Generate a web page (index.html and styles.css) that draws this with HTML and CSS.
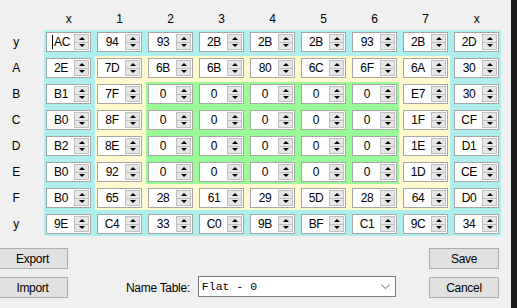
FILE: index.html
```html
<!DOCTYPE html>
<html lang="en">
<head>
    <meta charset="UTF-8">
    <meta name="viewport" content="width=device-width, initial-scale=1.0">
    <title>Attribute Table</title>
    <link rel="stylesheet" href="styles.css">
</head>
<body>
    <div class="screen">
        <div class="window">
            <div class="heads">
                <span>x</span><span>1</span><span>2</span><span>3</span><span>4</span><span>5</span><span>6</span><span>7</span><span>x</span>
            </div>
            <div class="table">
                <div class="rows">
                    <span>y</span><span>A</span><span>B</span><span>C</span><span>D</span><span>E</span><span>F</span><span>y</span>
                </div>
                <div class="panel cyan">
                    <div class="row" id="top"></div>
                    <div class="mid">
                        <div class="side" id="cyanLeft"></div>
                        <div class="panel yellow">
                            <div class="row" id="yellowTop"></div>
                            <div class="mid">
                                <div class="side" id="yellowLeft"></div>
                                <div class="green" id="green"></div>
                                <div class="side" id="yellowRight"></div>
                            </div>
                            <div class="row" id="yellowBottom"></div>
                        </div>
                        <div class="side" id="cyanRight"></div>
                    </div>
                    <div class="row" id="bottom"></div>
                </div>
            </div>
            <div class="footer">
                <button class="btn">Export</button>
                <div></div>
                <button class="btn">Save</button>
                <button class="btn">Import</button>
                <div class="name">
                    <label for="nameTable">Name Table:</label>
                    <div class="combo" id="nameTable">
                        <span>Flat - 0</span>
                        <svg width="9" height="6" viewBox="0 0 9 6"><polyline points="0.5,0.8 4.5,4.6 8.5,0.8" fill="none" stroke="#606060" stroke-width="1"/></svg>
                    </div>
                </div>
                <button class="btn">Cancel</button>
            </div>
        </div>
        <div class="edge"></div>
    </div>

    <script>
        const data = [
            ['AC', '94', '93', '2B', '2B', '2B', '93', '2B', '2D'],
            ['2E', '7D', '6B', '6B', '80', '6C', '6F', '6A', '30'],
            ['B1', '7F', '0', '0', '0', '0', '0', 'E7', '30'],
            ['B0', '8F', '0', '0', '0', '0', '0', '1F', 'CF'],
            ['B2', '8E', '0', '0', '0', '0', '0', '1E', 'D1'],
            ['B0', '92', '0', '0', '0', '0', '0', '1D', 'CE'],
            ['B0', '65', '28', '61', '29', '5D', '28', '64', 'D0'],
            ['9E', 'C4', '33', 'C0', '9B', 'BF', 'C1', '9C', '34']
        ];

        function box(value, focused) {
            const caret = focused ? '<i class="caret"></i>' : '';
            return '<div class="num"><span class="val">' + caret + value + '</span>' +
                '<span class="spin"><b class="up"></b><b class="down"></b></span></div>';
        }

        function fill(id, values) {
            document.getElementById(id).innerHTML = values.map(v => box(v)).join('');
        }

        document.getElementById('top').innerHTML = data[0].map((v, i) => box(v, i === 0)).join('');
        fill('bottom', data[7]);
        fill('cyanLeft', data.slice(1, 7).map(r => r[0]));
        fill('cyanRight', data.slice(1, 7).map(r => r[8]));
        fill('yellowTop', data[1].slice(1, 8));
        fill('yellowBottom', data[6].slice(1, 8));
        fill('yellowLeft', data.slice(2, 6).map(r => r[1]));
        fill('yellowRight', data.slice(2, 6).map(r => r[7]));
        fill('green', data.slice(2, 6).flatMap(r => r.slice(2, 7)));
    </script>
</body>
</html>
```

FILE: styles.css
```css
body {
    margin: 0;
    font-family: "Liberation Sans", Arial, sans-serif;
    font-size: 11px;
    letter-spacing: -0.3px;
    color: #000;
    background-color: #f0f0f0;
}
.screen {
    display: flex;
    width: 517px;
    height: 308px;
    overflow: hidden;
}
.window {
    width: 511px;
    background-color: #f0f0f0;
}
.edge {
    flex: 1;
    background-color: #1c1c1c;
}
.heads {
    display: flex;
    gap: 6px;
    height: 30px;
    padding: 13px 0 0 46px;
    box-sizing: border-box;
}
.heads span {
    width: 45px;
    text-align: center;
    line-height: 13px;
    font-size: 12px;
}
.table {
    display: flex;
}
.rows {
    display: flex;
    flex-direction: column;
    gap: 6px;
    width: 44px;
    padding: 2px 12px 0 0;
    box-sizing: border-box;
}
.rows span {
    height: 20px;
    line-height: 20px;
    text-align: center;
    font-size: 12px;
}
.panel {
    display: flex;
    flex-direction: column;
    gap: 4px;
    padding: 2px;
}
.cyan {
    background-color: #afeeee;
}
.yellow {
    background-color: #fffacd;
}
.green {
    display: grid;
    grid-template-columns: repeat(5, 45px);
    gap: 6px;
    padding: 2px;
    background-color: #98fb98;
}
.row {
    display: flex;
    gap: 6px;
}
.mid {
    display: flex;
    gap: 4px;
}
.side {
    display: flex;
    flex-direction: column;
    gap: 6px;
    padding: 2px 0;
}
.num {
    display: flex;
    width: 45px;
    height: 20px;
    box-sizing: border-box;
    padding: 1px;
    border: 1px solid #a6a6a6;
    background-color: #fff;
}
.val {
    flex: 1;
    text-align: center;
    line-height: 16px;
    font-size: 12px;
}
.caret {
    display: inline-block;
    width: 1px;
    height: 14px;
    margin-right: 1px;
    vertical-align: -3px;
    background-color: #000;
}
.spin {
    display: flex;
    flex-direction: column;
    width: 15px;
}
.spin b {
    flex: 1;
    display: flex;
    align-items: center;
    justify-content: center;
    background-color: #e6e6e6;
    border: 1px solid #c0c0c0;
}
.spin b + b {
    border-top: none;
}
.spin b::after {
    content: "";
    border-left: 3px solid transparent;
    border-right: 3px solid transparent;
}
.spin .up::after {
    border-bottom: 3px solid #000;
}
.spin .down::after {
    border-top: 3px solid #000;
}
.footer {
    display: grid;
    grid-template-columns: 71px 1fr 70px;
    grid-auto-rows: 21px;
    row-gap: 8px;
    margin: 12px 12px 0 -3px;
}
.btn {
    font-family: inherit;
    font-size: 12px;
    letter-spacing: -0.3px;
    padding: 0;
    background-color: #e1e1e1;
    border: 1px solid #adadad;
    color: #000;
}
.name {
    display: flex;
    align-items: center;
    gap: 8px;
    padding-left: 58px;
}
.name label {
    font-size: 12px;
}
.combo {
    display: flex;
    align-items: center;
    justify-content: space-between;
    width: 198px;
    height: 21px;
    margin-top: -2px;
    padding: 0 5px 0 3px;
    box-sizing: border-box;
    border: 1px solid #7a7a7a;
    background-color: #fff;
    font-family: "Liberation Mono", "Courier New", monospace;
    font-size: 11.5px;
    letter-spacing: 0;
}
```
